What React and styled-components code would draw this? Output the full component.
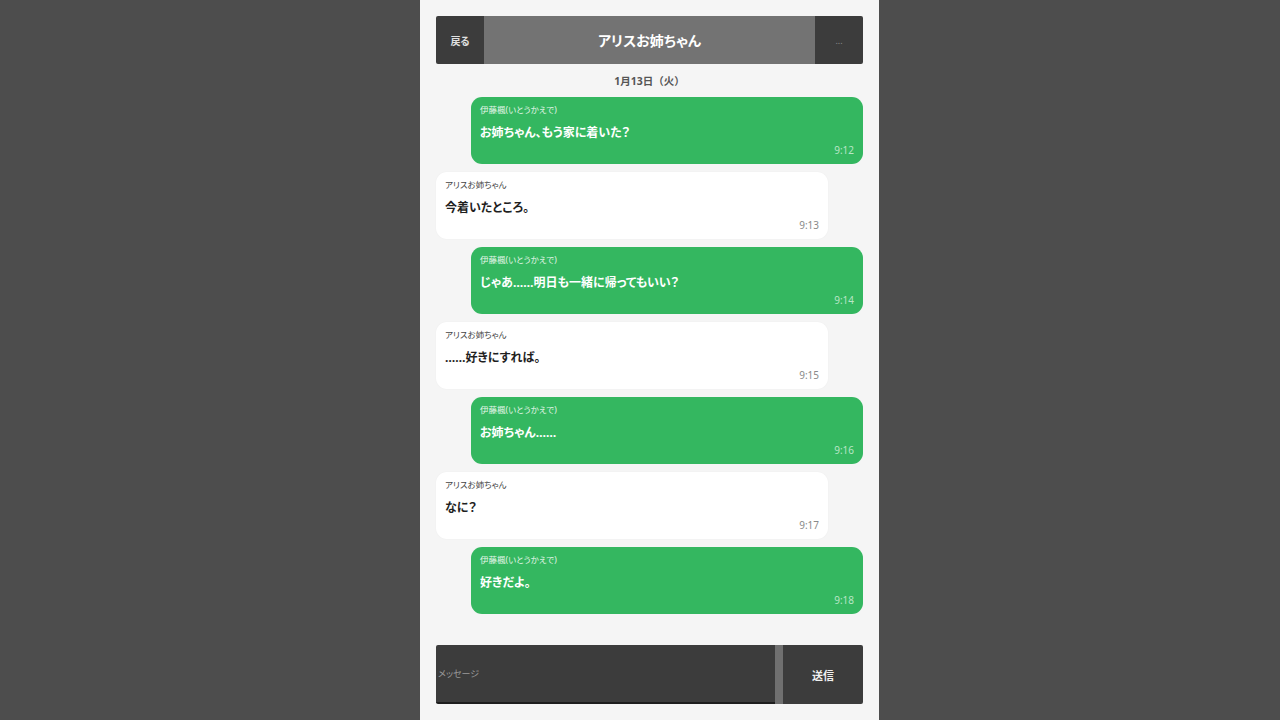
import React from 'react'
import styled, { createGlobalStyle } from 'styled-components'

const GlobalStyle = createGlobalStyle`
    html, body {
        margin: 0;
        padding: 0;
        background: #4d4d4d;
        font-family: "Noto Sans", "Noto Sans CJK JP", sans-serif;
        font-feature-settings: "palt";
    }
`

const Page = styled.div`
    display: flex;
    height: 100vh;
    padding-left: 420px;
`

const Panel = styled.main`
    width: 459px;
    height: 100vh;
    box-sizing: border-box;
    background: #f5f5f5;
    padding: 16px 16px 16px;
    display: flex;
    flex-direction: column;
`

const Header = styled.header`
    display: flex;
    height: 48px;
    border-radius: 2px;
    overflow: hidden;
    flex-shrink: 0;
`

const SideButton = styled.button`
    width: 48px;
    border: none;
    background: #3c3c3c;
    color: ${({ $muted }) => ($muted ? '#8a8a8a' : '#e0e0e0')};
    font-family: inherit;
    font-feature-settings: "palt";
    font-size: ${({ $muted }) => ($muted ? '9px' : '10px')};
    font-weight: ${({ $muted }) => ($muted ? 400 : 700)};
    padding: 0;
`

const Title = styled.h1`
    flex: 1;
    margin: 0;
    background: #737373;
    color: #fff;
    font-size: 14px;
    font-weight: 700;
    display: flex;
    align-items: center;
    justify-content: center;
`

const DateLabel = styled.p`
    margin: 10px 0 9px;
    text-align: center;
    font-size: 10.5px;
    line-height: 14px;
    font-weight: 700;
    color: #555;
    font-feature-settings: normal;
`

const List = styled.section`
    flex: 1;
    display: flex;
    flex-direction: column;
    gap: 8px;
`

const Bubble = styled.div`
    width: 392px;
    box-sizing: border-box;
    align-self: ${({ $mine }) => ($mine ? 'flex-end' : 'flex-start')};
    background: ${({ $mine }) => ($mine ? '#34b760' : '#ffffff')};
    color: ${({ $mine }) => ($mine ? '#ffffff' : '#1f1f1f')};
    border-radius: 11px;
    padding: 6px 9px 7px;
    box-shadow: ${({ $mine }) => ($mine ? 'none' : '0 0 2px rgba(0,0,0,0.04)')};
`

const Name = styled.div`
    font-size: 8.5px;
    line-height: 14px;
    color: ${({ $mine }) => ($mine ? '#e4f6ea' : '#444')};
`

const Text = styled.div`
    margin-top: 6px;
    font-size: 12px;
    line-height: 20px;
    font-weight: 700;
`

const Time = styled.div`
    margin-top: 0;
    text-align: right;
    font-size: 10px;
    line-height: 14px;
    color: ${({ $mine }) => ($mine ? '#b9e6c6' : '#8a8a8a')};
`

const Form = styled.form`
    display: flex;
    height: 59px;
    flex-shrink: 0;
    margin-top: 16px;
`

const Input = styled.input`
    flex: 1;
    min-width: 0;
    border: none;
    border-bottom: 2px solid #1e1e1e;
    border-radius: 2px 0 0 2px;
    background: #3c3c3c;
    color: #fff;
    font-family: inherit;
    font-feature-settings: "palt";
    font-size: 9px;
    padding: 0 2px;
    outline: none;

    &::placeholder {
        color: #9a9a9a;
    }
`

const Divider = styled.div`
    width: 8px;
    background: #707070;
`

const SendButton = styled.button`
    width: 80px;
    border: none;
    border-radius: 0 2px 2px 0;
    background: #3c3c3c;
    color: #f0f0f0;
    font-family: inherit;
    font-feature-settings: "palt";
    font-size: 11px;
    font-weight: 700;
`

const ME = '伊藤楓(いとうかえで)'
const HER = 'アリスお姉ちゃん'

const messages = [
    { mine: true, text: 'お姉ちゃん、もう家に着いた？', time: '9:12' },
    { mine: false, text: '今着いたところ。', time: '9:13' },
    { mine: true, text: 'じゃあ……明日も一緒に帰ってもいい？', time: '9:14' },
    { mine: false, text: '……好きにすれば。', time: '9:15' },
    { mine: true, text: 'お姉ちゃん……', time: '9:16' },
    { mine: false, text: 'なに？', time: '9:17' },
    { mine: true, text: '好きだよ。', time: '9:18' },
]

export default function App() {
    return (
        <>
            <GlobalStyle />
            <Page>
                <Panel>
                    <Header>
                        <SideButton>戻る</SideButton>
                        <Title>{HER}</Title>
                        <SideButton $muted>...</SideButton>
                    </Header>
                    <DateLabel>1月13日（火）</DateLabel>
                    <List>
                        {messages.map((m, i) => (
                            <Bubble key={i} $mine={m.mine}>
                                <Name $mine={m.mine}>{m.mine ? ME : HER}</Name>
                                <Text>{m.text}</Text>
                                <Time $mine={m.mine}>{m.time}</Time>
                            </Bubble>
                        ))}
                    </List>
                    <Form onSubmit={e => e.preventDefault()}>
                        <Input placeholder="メッセージ" />
                        <Divider />
                        <SendButton type="submit">送信</SendButton>
                    </Form>
                </Panel>
            </Page>
        </>
    )
}
